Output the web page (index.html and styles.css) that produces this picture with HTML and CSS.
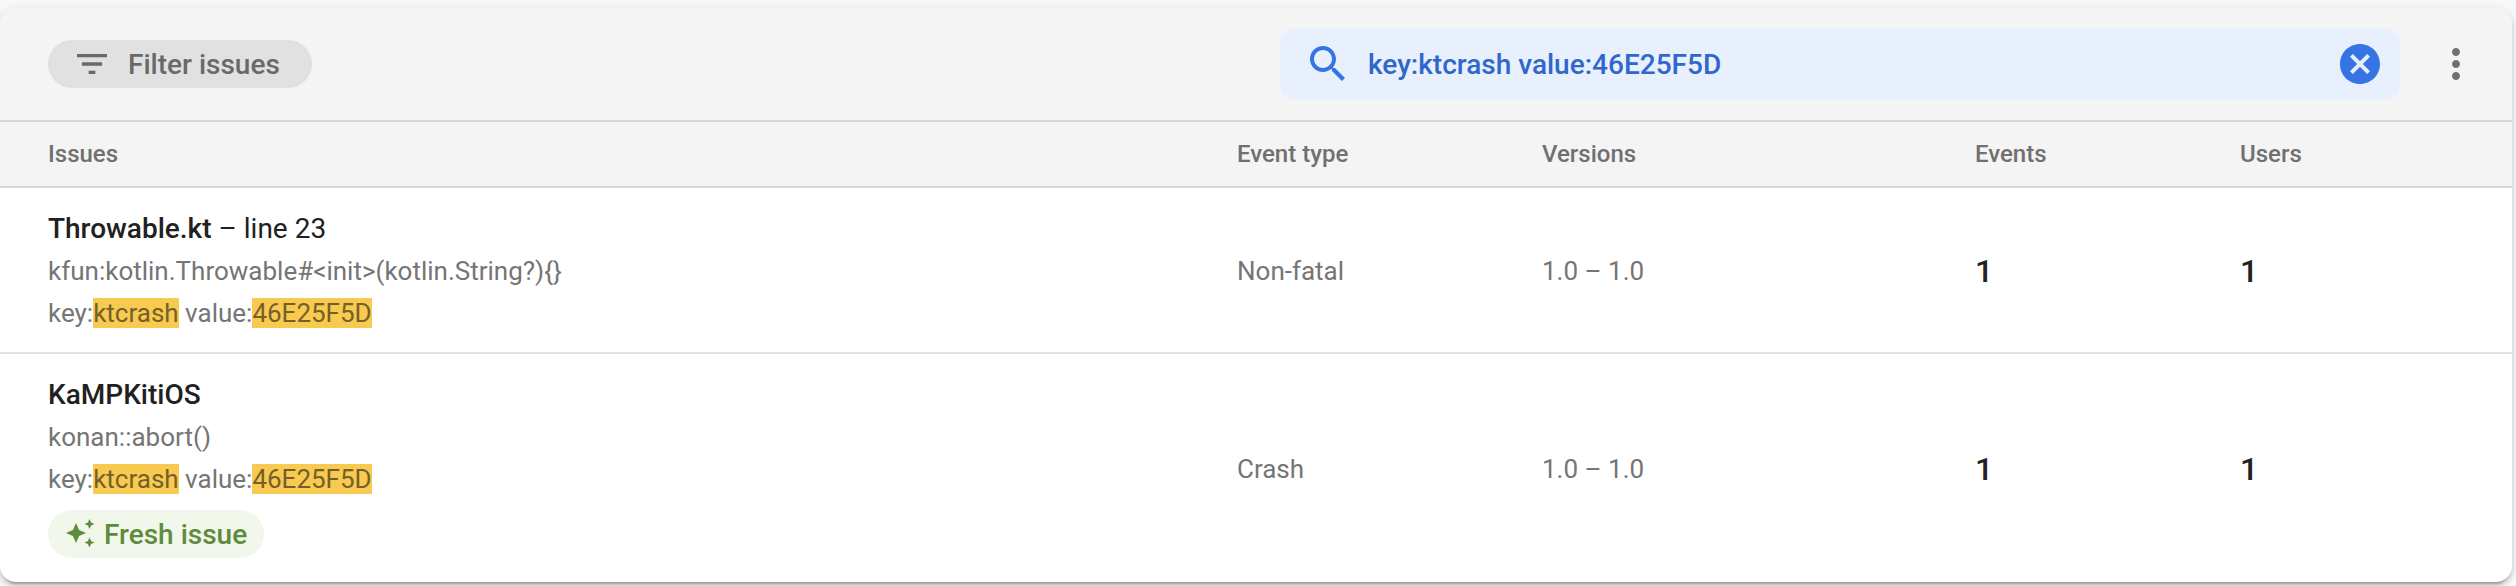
FILE: index.html
```html
<!DOCTYPE html>
<html lang="en">
<head>
<meta charset="utf-8">
<title>Issues</title>
<link rel="stylesheet" href="styles.css">
</head>
<body>
<main class="card">
  <div class="toolbar">
    <button class="filter">
      <svg class="filter-icon" viewBox="0 0 24 24"><path d="M10 18h4v-2h-4v2zM3 6v2h18V6H3zm3 7h12v-2H6v2z"/></svg>
      <span class="label">Filter issues</span>
    </button>
    <div class="search">
      <svg class="icon" viewBox="0 0 24 24"><path d="M15.5 14h-.79l-.28-.27C15.41 12.59 16 11.11 16 9.5 16 5.91 13.09 3 9.5 3S3 5.91 3 9.5 5.91 16 9.5 16c1.61 0 3.09-.59 4.23-1.57l.27.28v.79l5 4.99L20.49 19l-4.99-5zm-6 0C7.01 14 5 11.99 5 9.5S7.01 5 9.5 5 14 7.01 14 9.5 11.99 14 9.5 14z"/></svg>
      <span class="label query">key:ktcrash value:46E25F5D</span>
      <svg class="icon" viewBox="0 0 24 24"><path d="M12 2C6.47 2 2 6.47 2 12s4.47 10 10 10 10-4.47 10-10S17.53 2 12 2zm5 13.59L15.59 17 12 13.41 8.41 17 7 15.59 10.59 12 7 8.41 8.41 7 12 10.59 15.59 7 17 8.41 13.41 12 17 15.59z"/></svg>
    </div>
    <svg class="icon more" viewBox="0 0 24 24"><path d="M12 8c1.1 0 2-.9 2-2s-.9-2-2-2-2 .9-2 2 .9 2 2 2zm0 2c-1.1 0-2 .9-2 2s.9 2 2 2 2-.9 2-2-.9-2-2-2zm0 6c-1.1 0-2 .9-2 2s.9 2 2 2 2-.9 2-2-.9-2-2-2z"/></svg>
  </div>
  <div class="row header">
    <span>Issues</span><span>Event type</span><span>Versions</span><span>Events</span><span>Users</span>
  </div>
  <div class="row issue">
    <div class="details">
      <div class="title"><b>Throwable.kt</b> – line 23</div>
      <div class="line">kfun:kotlin.Throwable#&lt;init&gt;(kotlin.String?){}</div>
      <div class="line">key:<mark>ktcrash</mark> value:<mark>46E25F5D</mark></div>
    </div>
    <span class="meta">Non-fatal</span><span class="meta">1.0 – 1.0</span><span class="count">1</span><span class="count">1</span>
  </div>
  <div class="row issue">
    <div class="details">
      <div class="title"><b>KaMPKitiOS</b></div>
      <div class="line">konan::abort()</div>
      <div class="line">key:<mark>ktcrash</mark> value:<mark>46E25F5D</mark></div>
      <div class="fresh">
        <svg class="sparkle" viewBox="0 0 30 30"><path d="M11 4l3.100 6.900L21 14l-6.900 3.100L11 24l-3.100-6.900L1 14l6.900-3.100zM24.500 0l1.550 3.450L29.500 5l-3.450 1.550L24.500 10l-1.550-3.450L19.500 5l3.450-1.550zM24.500 18.500l1.550 3.450 3.450 1.550-3.450 1.550-1.550 3.450-1.550-3.450-3.450-1.550 3.450-1.550z"/></svg>
        <span class="label">Fresh issue</span>
      </div>
    </div>
    <span class="meta">Crash</span><span class="meta">1.0 – 1.0</span><span class="count">1</span><span class="count">1</span>
  </div>
</main>
</body>
</html>
```
FILE: styles.css
```css
* { box-sizing: border-box; }
body {
  margin: 0;
  height: 586px;
  padding: 8px 4px 4px 0;
  overflow: hidden;
  background: #f6f8fa;
  font-family: Roboto, sans-serif;
  color: #212121;
}
.card {
  height: 574px;
  border-radius: 16px;
  background: #fff;
  overflow: hidden;
  box-shadow: 0 6px 2px -4px rgba(0,0,0,.2), 0 4px 4px rgba(0,0,0,.14), 0 2px 10px rgba(0,0,0,.12);
}
.toolbar {
  display: flex;
  align-items: center;
  height: 114px;
  padding: 0 32px 0 48px;
  background: #f4f4f4;
  border-bottom: 2px solid #d6d6d6;
}
.filter {
  display: flex;
  align-items: center;
  gap: 16px;
  width: 264px;
  height: 48px;
  margin: 0 auto 0 0;
  padding: 0 0 0 24px;
  border: 0;
  border-radius: 24px;
  background: #e1e1e1;
  color: #696969;
  font-family: inherit;
}
.label {
  padding-top: 1px;
  font-weight: 500;
  font-size: 28px;
  line-height: 33px;
}
svg { display: block; flex: none; fill: currentColor; }
.filter-icon { width: 40px; height: 40px; }
.icon { width: 48px; height: 48px; }
.search {
  display: flex;
  align-items: center;
  width: 1120px;
  height: 72px;
  margin-right: 32px;
  padding: 0 16px 0 24px;
  border-radius: 16px;
  background: #e8effd;
  color: #3574e2;
}
.query {
  flex: 1;
  margin-left: 16px;
  color: #2f67cb;
}
.more { color: #707070; }
.row {
  display: grid;
  grid-template-columns: 1189px 305px 433px 265px 1fr;
  align-items: center;
  padding-left: 48px;
}
.header {
  height: 66px;
  background: #f4f4f4;
  border-bottom: 2px solid #d6d6d6;
  color: #707070;
  font-weight: 500;
  font-size: 24px;
}
.issue { height: 166px; border-bottom: 2px solid #e0e0e0; }
.issue:last-child { height: 228px; border-bottom: 0; }
.details { align-self: start; padding-top: 20px; }
.title { height: 42px; font-size: 28px; line-height: 41px; }
.title b { font-weight: 500; }
.line { height: 42px; font-size: 26px; line-height: 42px; color: #757575; }
mark { background: #f8ca4f; color: #75602a; }
.fresh {
  display: flex;
  align-items: center;
  gap: 9px;
  width: 216px;
  height: 48px;
  margin-top: 10px;
  padding-left: 17px;
  border-radius: 24px;
  background: #f1f7eb;
  color: #5f8b3c;
}
.sparkle { width: 30px; height: 30px; }
.meta { padding-top: 2px; font-size: 26px; color: #757575; }
.count { padding-top: 2px; font-size: 32px; font-weight: 500; }
```
